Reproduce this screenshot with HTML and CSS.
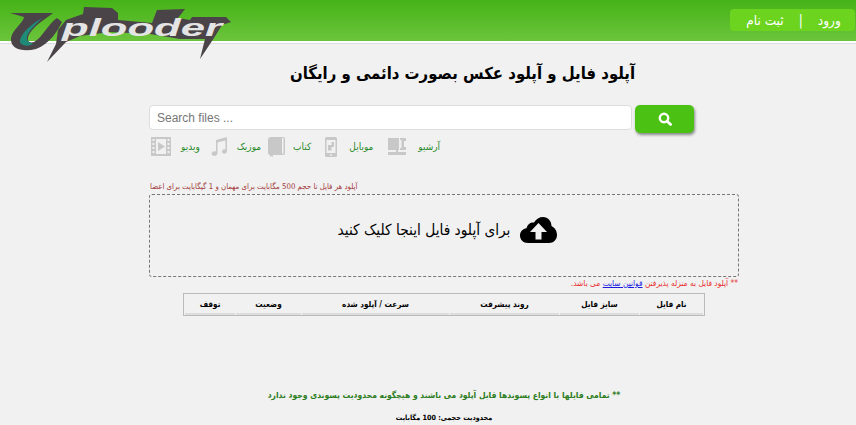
FILE: index.html
```html
<!DOCTYPE html>
<html lang="fa">
<head>
<meta charset="utf-8">
<title>Uplooder</title>
<link rel="stylesheet" href="styles.css">
</head>
<body>
<header class="topbar">
  <svg class="logo" width="234" height="64" viewBox="0 0 234 64" aria-label="Uplooder">
    <path d="M58 30 L66 20 L83 14 L84 7 L112 8 L118 13 L118 20 L152 23 L157 10 L185 9 L178 18 L190 20 L192 17 L226 17 L231 22 L222 25 L214 38 L200 59 L205 39 L180 39 L150 34 L110 32 L80 36 L66 42 L47 62 L56 44 Z" fill="#4a4347"/>
    <path d="M10 13 L53 13 C47 18 36 24 30 33 C26 39 28 44 34 42 C42 38 48 24 57 18 L62 22 C58 30 50 44 36 49 C24 52 10 50 11 38 C12 30 24 22 24 17 Z" fill="#4a4347"/>
    <path d="M42 18 C32 24 22 32 20 40 C19 46 28 47 33 44 C26 42 25 37 30 31 C33 27 38 22 42 18 Z" fill="#1f8a78"/>
    <text class="logo-word" x="62" y="36" textLength="160" lengthAdjust="spacingAndGlyphs">plooder</text>
  </svg>
  <nav class="auth">
    <a class="auth-link" href="#">ثبت نام</a>
    <span class="auth-sep">|</span>
    <a class="auth-link" href="#">ورود</a>
  </nav>
</header>
<main class="page">
  <h1 class="title" dir="rtl">آپلود فایل و آپلود عکس بصورت دائمی و رایگان</h1>
  <form class="search">
    <input class="search-input" type="text" placeholder="Search files ...">
    <button class="search-btn" type="button" aria-label="search">
      <svg width="14" height="14" viewBox="0 0 14 14"><circle cx="6" cy="6" r="4.2" fill="none" stroke="#fff" stroke-width="2.4"/><path d="M9.2 9.2 L12.6 12.4" stroke="#fff" stroke-width="2.8" stroke-linecap="round"/></svg>
    </button>
  </form>
  <div class="cats">
    <a class="cat cat-video" href="#">
      <svg width="20" height="19" viewBox="0 0 20 19"><path fill="#c8c8c8" d="M0 0h20v19H0z"/><path fill="#f1f1f1" d="M5 2h10v15H5zM1.500 2h2v2h-2zM1.500 6h2v2h-2zM1.500 10h2v2h-2zM1.500 14h2v2h-2zM16.500 2h2v2h-2zM16.500 6h2v2h-2zM16.500 10h2v2h-2zM16.500 14h2v2h-2z"/><path fill="#c8c8c8" d="M7 5l7 4.500-7 4.500z"/></svg>
      <span class="cat-label">ویدیو</span>
    </a>
    <a class="cat cat-music" href="#">
      <svg width="17" height="19" viewBox="0 0 17 19"><path fill="#c8c8c8" d="M5 3 L16 0 V14 C16 16.500 13.500 17 12.500 16.500 C10.500 16 10.500 12.800 13 12.300 C13.500 12.200 14 12.300 14.500 12.500 V3.500 L6.500 5.500 V16 C6.500 18.500 4 19.200 2.500 18.800 C0 18 0 15 3 14.300 C3.800 14.100 4.500 14.300 5 14.500 Z"/></svg>
      <span class="cat-label">موزیک</span>
    </a>
    <a class="cat cat-book" href="#">
      <svg width="17" height="20" viewBox="0 0 17 20"><path fill="#c8c8c8" d="M3 0h12.500a1.500 1.500 0 0 1 1.500 1.500V16a2 2 0 0 1-2 2H5v2l-1.500-1L2 20v-2a2 2 0 0 1-2-2V3a3 3 0 0 1 3-3z"/><path fill="#f1f1f1" d="M14 1h1.500v15.500H14z"/></svg>
      <span class="cat-label">کتاب</span>
    </a>
    <a class="cat cat-mobile" href="#">
      <svg width="12" height="20" viewBox="0 0 12 20"><rect width="12" height="20" rx="1.500" fill="#c8c8c8"/><path fill="#f1f1f1" d="M1.500 3h9v13h-9z"/><path fill="#c8c8c8" d="M3 8h3.500V5H9v5H6.500v3.500H3z"/><circle cx="6" cy="18" r="1" fill="#f1f1f1"/></svg>
      <span class="cat-label">موبایل</span>
    </a>
    <a class="cat cat-archive" href="#">
      <svg width="18" height="18" viewBox="0 0 18 18"><path fill="#c8c8c8" d="M0 1h11v12H0zM12 1h6v3h-2v6h2v3h-6v-2h1.500V3H12zM8 13h2v2h8v3H0v-3h8z"/></svg>
      <span class="cat-label">آرشیو</span>
    </a>
  </div>
  <p class="limit-note" dir="rtl">آپلود هر فایل تا حجم 500 مگابایت برای مهمان و 1 گیگابایت برای اعضا</p>
  <div class="dropzone">
    <span class="drop-text" dir="rtl">برای آپلود فایل اینجا کلیک کنید</span>
    <svg class="drop-icon" width="37" height="26" viewBox="0 0 37 26"><path d="M8 26 C3 26 0 22.500 0 18.500 C0 14.500 3 11.800 6.500 11.300 C7.500 7 11 5 14 5.500 C16 2 19.500 0 23 0 C28 0 31.500 4 31.500 9 C34.500 10.500 37 13.500 37 18 C37 22.500 33.500 26 29 26 Z" fill="#000"/><path d="M18.500 6 L27 15 H21.500 V22.500 H15.500 V15 H10 Z" fill="#f1f1f1"/></svg>
  </div>
  <p class="terms" dir="rtl">** آپلود فایل به منزله پذیرفتن <a class="terms-link" href="#">قوانین سایت</a> می باشد.</p>
  <table class="uploads" dir="rtl">
    <thead>
      <tr>
        <th class="col-name">نام فایل</th>
        <th class="col-size">سایز فایل</th>
        <th class="col-progress">روند پیشرفت</th>
        <th class="col-speed">سرعت / آپلود شده</th>
        <th class="col-status">وضعیت</th>
        <th class="col-stop">توقف</th>
      </tr>
    </thead>
  </table>
</main>
<footer class="foot" dir="rtl">
  <p class="foot-main">** تمامی فایلها با انواع پسوندها قابل آپلود می باشند و هیچگونه محدودیت پسوندی وجود ندارد</p>
  <p class="foot-sub">محدودیت حجمی: 100 مگابایت</p>
</footer>
</body>
</html>
```
FILE: styles.css
```css
* { box-sizing: border-box; }
html, body { margin: 0; height: 425px; overflow: hidden; }
body {
  background: #f1f1f1;
  font-family: "DejaVu Sans Condensed", "DejaVu Sans", sans-serif;
  font-stretch: condensed;
  color: #000;
}
.topbar {
  position: relative;
  height: 43px;
  background: linear-gradient(#45b317, #6cc43c);
  border-bottom: 2px solid #fff;
  box-shadow: 0 1px 0 #ddd;
  display: flex;
  justify-content: flex-end;
  align-items: flex-start;
}
.logo { position: absolute; left: 0; top: 0; overflow: visible; }
.logo-word {
  font-family: "Liberation Sans", sans-serif;
  font-size: 24px;
  font-weight: 700;
  font-style: italic;
  fill: #e4e4e4;
}
.auth {
  width: 125px;
  height: 22px;
  margin: 9px 1px 0 0;
  background: #6cd41f;
  border-radius: 4px;
  display: flex;
  justify-content: center;
  align-items: center;
  gap: 15px;
  padding-left: 2px;
  font-size: 13.500px;
}
.auth-link { color: #fff; text-decoration: none; }
.auth-sep { color: #fff; }
.page { width: 590px; margin-left: 149px; }
.title {
  margin: 16px -37px 0 0;
  height: 30px;
  line-height: 30px;
  text-align: center;
  font-size: 16.600px;
  font-weight: 700;
}
.search { display: flex; gap: 3px; margin-top: 16px; height: 28px; }
.search-input {
  width: 483px;
  height: 25px;
  border: 1px solid #ddd;
  border-radius: 4px;
  background: #fff;
  padding: 0 7px;
  font: 12px "Liberation Sans", sans-serif;
  color: #555;
}
.search-input::placeholder { color: #777; opacity: 1; }
.search-btn {
  width: 59px;
  height: 28px;
  border: 0;
  padding: 0;
  border-radius: 5px;
  background: #4bc213;
  box-shadow: 1px 2px 3px #888;
  display: flex;
  align-items: center;
  justify-content: center;
}
.cats { display: flex; margin: 4px 0 0 2px; height: 24px; }
.cat { display: flex; align-items: flex-start; text-decoration: none; }
.cat-label { font-size: 10px; color: #2a8a2a; line-height: 19px; }
.cat-video .cat-label { margin-left: 10px; }
.cat-music { margin-left: 11px; }
.cat-music .cat-label { margin-left: 9px; }
.cat-book { margin-left: 7px; }
.cat-book .cat-label { margin-left: 8px; }
.cat-mobile { margin-left: 14px; }
.cat-mobile .cat-label { margin-left: 12px; }
.cat-archive { margin-left: 15px; }
.cat-archive .cat-label { margin-left: 12px; }
.limit-note {
  margin: 19px 0 0;
  padding-left: 1px;
  height: 14px;
  line-height: 14px;
  font-size: 7.800px;
  color: #a33b3b;
  text-align: left;
}
.dropzone {
  height: 83px;
  border: 1px dashed #777;
  border-radius: 3px;
  display: flex;
  justify-content: center;
  align-items: center;
  gap: 10px;
  padding: 0 0 12px 7px;
}
.drop-text { font-size: 15.300px; }
.terms {
  margin: 0 1px 0 0;
  height: 13px;
  line-height: 13px;
  font-size: 8.300px;
  color: #e83030;
}
.terms-link { color: #1a1ae0; }
.uploads {
  margin: 3px 0 0 34px;
  width: 522px;
  height: 23px;
  border: 1px solid #bbb;
  border-spacing: 1px 0;
  table-layout: fixed;
  font-size: 8.100px;
}
.uploads th { border-bottom: 2px solid #ddd; padding: 0; height: 21px; font-weight: 700; }
.col-name { width: 63px; }
.col-size { width: 79px; }
.col-progress { width: 109px; }
.col-speed { width: 147px; }
.col-status { width: 65px; }
.foot { width: 856px; padding-left: 32px; text-align: center; }
.foot-main { margin: 71px 0 0; height: 16px; line-height: 16px; font-size: 8.500px; font-weight: 700; color: #2d7d22; }
.foot-sub { margin: 8px 0 0; height: 14px; line-height: 14px; font-size: 7.200px; font-weight: 700; }
```
